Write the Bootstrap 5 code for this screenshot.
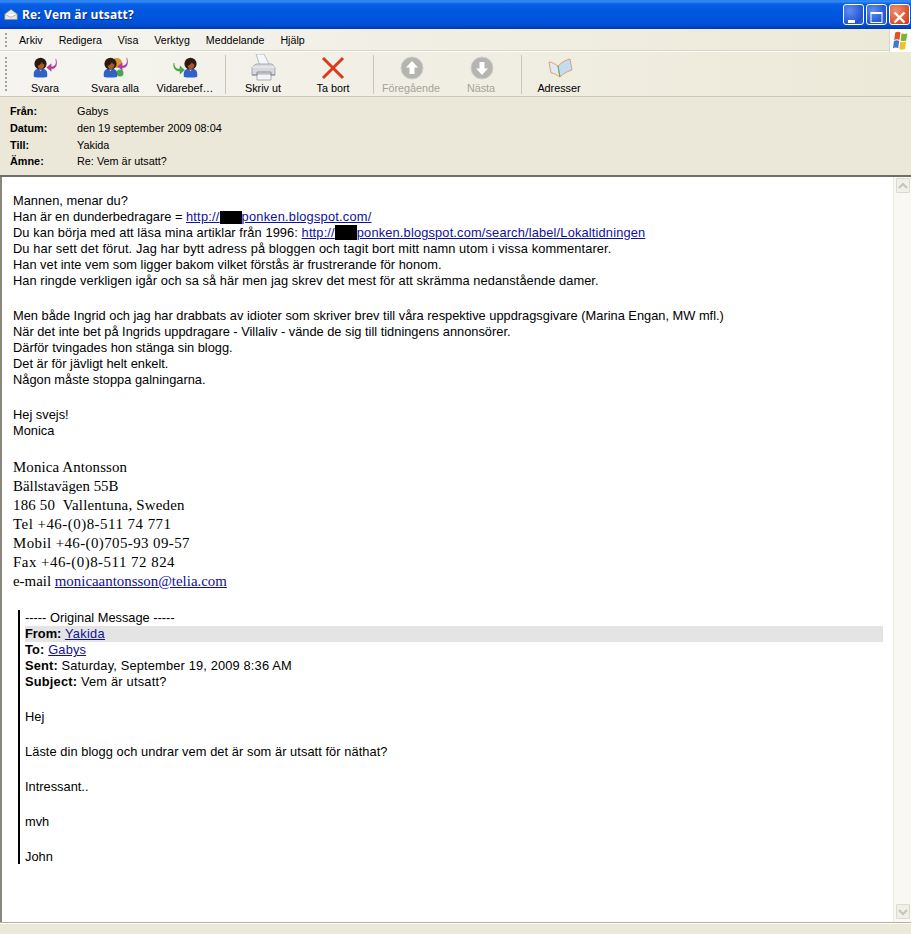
<!DOCTYPE html>
<html lang="sv">
<head>
<meta charset="utf-8">
<title>Re: Vem är utsatt?</title>
<link href="https://cdn.jsdelivr.net/npm/bootstrap@5.3.0/dist/css/bootstrap.min.css" rel="stylesheet">
<style>
html,body{margin:0;height:934px;overflow:hidden;background:#ece9d8}
.xp-win{width:911px;height:934px;font-family:"Liberation Sans",Arial,sans-serif;color:#000}
.xp-title{height:29px;flex:none;background:linear-gradient(#1f74ec 0,#3a93f7 1px,#0a5fe4 4px,#0058e0 12px,#0050d8 24px,#0044c4 27px,#003aa8 29px);color:#fff;padding:0 1px 0 4px}
.xp-title-text{font:bold 12px/28px "Open Sans","Liberation Sans",sans-serif;margin-left:4px;padding-top:1px;text-shadow:1px 1px 0 #0a2a80;letter-spacing:.12px}
.xp-wbtn{width:21px;height:21px;border:1px solid #fff;border-radius:3px;margin-left:2px;background:radial-gradient(circle at 30% 30%,#5f8ff0,#2454d4 70%,#3364e0);display:block}
.xp-wbtn.xp-close{background:radial-gradient(circle at 30% 30%,#ef9070,#d8502a 70%,#c23a18)}
.xp-bar{background:linear-gradient(90deg,#f5f4ef,#ece9d8)}
.xp-menu{height:23px;flex:none;padding-left:19px;font:10.65px/22px "Liberation Sans",sans-serif;gap:16px;border-bottom:1px solid #fff;box-shadow:inset 0 -1px 0 #d8d5c4}
.xp-flag{width:22px;height:23px;background:#fff;border-left:1px solid #d8d5c4;margin-left:auto;overflow:hidden}
.xp-grip{width:2px;background-image:linear-gradient(#a8a596 50%,transparent 50%);background-size:2px 4px;margin:0;flex:none}
.xp-menu .xp-grip{position:absolute;left:5px;top:33px;height:15px}
.xp-tools{height:45px;flex:none;padding-left:10px;border-bottom:1px solid #c9c6b6;position:relative}
.xp-tools .xp-grip{position:absolute;left:5px;top:5px;height:35px}
.xp-tool{width:70px;font-size:10.8px;line-height:13px;text-align:center;white-space:nowrap}
.xp-tool svg{display:block;height:28px;width:30px;margin:2px auto 0}
.xp-off{color:#a5a397}
.xp-sep{width:1px;background:#c9c6b6;margin:3px 2px 2px 5px;flex:none}
.xp-head{height:80px;flex:none;background:#ebe8d9;padding:6px 0 0 10px;font-size:10.85px;line-height:16.8px;border-bottom:2px solid #716f64}
.xp-head dt{width:67px;font-weight:700;margin:0;flex:none}
.xp-head dd{margin:0}
.xp-head dl{margin:0}
.xp-main{height:745px;flex:none;background:#fff;border-left:2px solid #8a887c}
.xp-body{width:891px;padding:16px 0 0 11px;font-size:12.83px;line-height:16px;flex:none;white-space:nowrap}
.xp-body a{color:#10109a;text-decoration:underline}
.xp-gap{height:19px}
.xp-redact{display:inline-block;background:#000;width:22px;height:13px;vertical-align:-3px}
.xp-redact.xp-tall{height:15px;vertical-align:-3px;margin-top:-2px}
.xp-sig{font-family:"Liberation Serif","Times New Roman",serif;font-size:14.9px;line-height:19px;margin-top:19px}
.xp-quote{border-left:2px solid #000;margin:19px 0 0 5px;padding:0 0 0 5px;width:865px;height:254px}
.xp-from{background:#e4e4e4}
.xp-t06{letter-spacing:.06px}
.xp-t08{letter-spacing:.08px}
.xp-t10{letter-spacing:.105px}
.xp-t13{letter-spacing:.13px}
.xp-t16{letter-spacing:.16px}
.xp-t20{letter-spacing:.2px}
.xp-t22{letter-spacing:.22px}
.xp-t30{letter-spacing:.3px}
.xp-t42{letter-spacing:.42px}
.xp-t50{letter-spacing:.5px}
.xp-scroll{width:18px;background:#f9f8f3;border-left:1px solid #eeede5;padding:1px 1px 3px 2px}
.xp-arrow{width:14px;height:15px;background:#f1f0e8;border:1px solid #dcdbd0;border-radius:1px}
.xp-foot{flex:1 1 auto;background:#ece9d8;border-top:1px solid #b5b2a5;box-shadow:inset 0 1px 0 #fff}
</style>
</head>
<body>
<svg width="0" height="0" class="position-absolute">
<defs>
<symbol id="xp-person" viewBox="0 0 16 22">
<path d="M1 21c-1-6 1-9 7-9s8 3 7 9c-4 1-10 1-14 0z" fill="#2f62c8"/>
<path d="M6 12l2 3 2-3z" fill="#dfe8f8"/>
<circle cx="8" cy="7" r="6.500" fill="#2b1a12"/>
<path d="M5 9c.5 2.500 1.600 3.800 3.400 3.800S11.800 11 12.400 8c-1.300-.4-2.300-1.300-3-2.600C8.600 7.200 7 8.600 5 9z" fill="#a8582a"/>
</symbol>
<symbol id="xp-back" viewBox="0 0 14 17">
<path d="M11.500 1c1.500 6-.5 10-5.500 9.500V7L.5 11.500 6 16v-3c6 .5 8-5 5.500-12z" fill="#b53aa8" stroke="#8c2a88" stroke-width=".4"/>
</symbol>
</defs>
</svg>
<div class="xp-win d-flex flex-column">
  <div class="xp-title d-flex align-items-center">
    <svg width="14" height="13" viewBox="0 0 18 15"><path d="M1 7l8-6 8 6v7H1z" fill="#e8e8e0" stroke="#8a8a80" stroke-width=".7"/><path d="M1 7l8 4 8-4" fill="#fff" stroke="#8a8a80" stroke-width=".7"/></svg>
    <span class="xp-title-text">Re: Vem är utsatt?</span>
    <span class="ms-auto d-flex">
      <span class="xp-wbtn"><svg width="19" height="19" viewBox="0 0 19 19"><rect x="4" y="12" width="7" height="3" fill="#fff"/></svg></span>
      <span class="xp-wbtn"><svg width="19" height="19" viewBox="0 0 19 19"><rect x="4" y="4.500" width="11" height="10" fill="none" stroke="#fff" stroke-width="1"/><rect x="4" y="4" width="11" height="2" fill="#fff"/></svg></span>
      <span class="xp-wbtn xp-close"><svg width="19" height="19" viewBox="0 0 19 19"><path d="M4.500 4.500l10 10M14.500 4.500l-10 10" stroke="#fff" stroke-width="2.400"/></svg></span>
    </span>
  </div>
  <div class="xp-menu xp-bar d-flex">
    <span class="xp-grip"></span>
    <span>Arkiv</span><span>Redigera</span><span>Visa</span><span>Verktyg</span><span>Meddelande</span><span>Hjälp</span>
    <span class="xp-flag d-flex align-items-center">
      <svg width="24" height="22" viewBox="0 0 20 20" class="flex-none"><path d="M5 2c2-1 3.500-1 5 0l-1 7c-1.500-1-3-1-5 0z" fill="#e2502a"/><path d="M11 2.500c2 1 3.500 1 5.500 0l-1 7c-2 1-3.500 1-5.500 0z" fill="#7cb82f"/><path d="M3.800 10c2-1 3.500-1 5 0l-1 7c-1.500-1-3-1-5 0z" fill="#3a7ad8"/><path d="M9.800 10.500c2 1 3.500 1 5.500 0l-1 7c-2 1-3.500 1-5.500 0z" fill="#f4c02a"/></svg>
    </span>
  </div>
  <div class="xp-tools xp-bar d-flex">
    <span class="xp-grip"></span>
    <div class="xp-tool"><svg viewBox="0 0 30 28"><use href="#xp-person" x="3" y="3" width="15" height="21"/><use href="#xp-back" x="16" y="4" width="12" height="14"/></svg>Svara</div>
    <div class="xp-tool"><svg viewBox="0 0 30 28"><circle cx="17" cy="9" r="5" fill="#d89a30"/><circle cx="20" cy="19" r="3.500" fill="#4aa848"/><use href="#xp-person" x="3" y="3" width="15" height="21"/><use href="#xp-back" x="17" y="3" width="12" height="14"/></svg>Svara alla</div>
    <div class="xp-tool"><svg viewBox="0 0 30 28"><path d="M4 9c0 4 2.500 6.500 6 6v-3l4.500 4-4.500 4v-3c-4 .5-7.500-3-6-8z" fill="#4aa848" stroke="#2f8a30" stroke-width=".4"/><use href="#xp-person" x="13" y="3" width="15" height="21"/></svg>Vidarebef…</div>
    <span class="xp-sep"></span>
    <div class="xp-tool"><svg viewBox="0 0 30 28"><path d="M8 0h8l6 12H12z" fill="#f4f6fa" stroke="#a8b0bc" stroke-width=".8"/><path d="M4 13l4-3h16l3 3v8H4z" fill="#d6d8dc" stroke="#989ca4" stroke-width=".8"/><path d="M4 13h23" stroke="#f2f2f4"/><path d="M9 20h14v6H9z" fill="#f4f4f8" stroke="#989ca4" stroke-width=".8"/><path d="M4 21h5v-3h14v3h4" fill="none" stroke="#7a7e86" stroke-width=".8"/></svg>Skriv ut</div>
    <div class="xp-tool"><svg viewBox="0 0 30 28"><path d="M5 4l20 20M25 4L5 24" stroke="#dc3a1a" stroke-width="3"/></svg>Ta bort</div>
    <span class="xp-sep"></span>
    <div class="xp-tool xp-off"><svg viewBox="0 0 30 28"><circle cx="16" cy="14" r="11" fill="#b4b4b0" stroke="#d0d0cc"/><path d="M16 7l6 6.500h-3.500V20h-5v-6.500H10z" fill="#fff"/></svg>Föregående</div>
    <div class="xp-tool xp-off"><svg viewBox="0 0 30 28"><circle cx="16" cy="14" r="11" fill="#b4b4b0" stroke="#d0d0cc"/><path d="M16 21l6-6.500h-3.500V8h-5v6.500H10z" fill="#fff"/></svg>Nästa</div>
    <span class="xp-sep"></span>
    <div class="xp-tool"><svg viewBox="0 0 30 28"><path d="M5 8c3 0 6 2 9 4l2 11c-3-2-6-4-9-4z" fill="#dfeaf6" stroke="#e0a070" stroke-width="1"/><path d="M26 5c-4 1-8 3-12 7l2 11c3-3 6-5 12-7z" fill="#c4dcf2" stroke="#e0a070" stroke-width="1"/><path d="M14 12l2 11" stroke="#6fa860"/></svg>Adresser</div>
  </div>
  <div class="xp-head">
    <dl>
      <div class="d-flex"><dt>Från:</dt><dd>Gabys</dd></div>
      <div class="d-flex"><dt>Datum:</dt><dd>den 19 september 2009 08:04</dd></div>
      <div class="d-flex"><dt>Till:</dt><dd>Yakida</dd></div>
      <div class="d-flex"><dt>Ämne:</dt><dd>Re: Vem är utsatt?</dd></div>
    </dl>
  </div>
  <div class="xp-main d-flex">
    <div class="xp-body">
      <div>Mannen, menar du?</div>
      <div>Han är en dunderbedragare = <a href="#" class="xp-t22">http://<span class="xp-redact"></span>ponken.blogspot.com/</a></div>
      <div class="xp-t08">Du kan börja med att läsa mina artiklar från 1996: <a href="#" class="xp-t16">http://<span class="xp-redact xp-tall"></span>ponken.blogspot.com/search/label/Lokaltidningen</a></div>
      <div class="xp-t10">Du har sett det förut. Jag har bytt adress på bloggen och tagit bort mitt namn utom i vissa kommentarer.</div>
      <div>Han vet inte vem som ligger bakom vilket förstås är frustrerande för honom.</div>
      <div class="xp-t06">Han ringde verkligen igår och sa så här men jag skrev det mest för att skrämma nedanstående damer.</div>
      <div class="xp-gap"></div>
      <div>Men både Ingrid och jag har drabbats av idioter som skriver brev till våra respektive uppdragsgivare (Marina Engan, MW mfl.)</div>
      <div>När det inte bet på Ingrids uppdragare - Villaliv - vände de sig till tidningens annonsörer.</div>
      <div>Därför tvingades hon stänga sin blogg.</div>
      <div>Det är för jävligt helt enkelt.</div>
      <div>Någon måste stoppa galningarna.</div>
      <div class="xp-gap"></div>
      <div>Hej svejs!</div>
      <div>Monica</div>
      <div class="xp-sig">
        <div class="xp-t13">Monica Antonsson</div>
        <div>Bällstavägen 55B</div>
        <div class="xp-t20">186 50&nbsp; Vallentuna, Sweden</div>
        <div class="xp-t50">Tel +46-(0)8-511 74 771</div>
        <div class="xp-t42">Mobil +46-(0)705-93 09-57</div>
        <div class="xp-t50">Fax +46-(0)8-511 72 824</div>
        <div>e-mail <a href="#">monicaantonsson@telia.com</a></div>
      </div>
      <div class="xp-quote">
        <div>----- Original Message -----</div>
        <div class="xp-from"><b>From:</b> <a href="#" class="xp-t30">Yakida</a></div>
        <div class="xp-t16"><b>To:</b> <a href="#">Gabys</a></div>
        <div class="xp-t16"><b>Sent:</b> Saturday, September 19, 2009 8:36 AM</div>
        <div class="xp-t20"><b>Subject:</b> Vem är utsatt?</div>
        <div class="xp-gap"></div>
        <div>Hej</div>
        <div class="xp-gap"></div>
        <div class="xp-t06">Läste din blogg och undrar vem det är som är utsatt för näthat?</div>
        <div class="xp-gap"></div>
        <div>Intressant..</div>
        <div class="xp-gap"></div>
        <div>mvh</div>
        <div class="xp-gap"></div>
        <div>John</div>
      </div>
    </div>
    <div class="xp-scroll d-flex flex-column justify-content-between">
      <span class="xp-arrow d-flex align-items-center justify-content-center"><svg width="12" height="12" viewBox="0 0 12 12"><path d="M2 8l4-4 4 4" fill="none" stroke="#c4c4b8" stroke-width="2"/></svg></span>
      <span class="xp-arrow d-flex align-items-center justify-content-center"><svg width="12" height="12" viewBox="0 0 12 12"><path d="M2 4l4 4 4-4" fill="none" stroke="#c4c4b8" stroke-width="2"/></svg></span>
    </div>
  </div>
  <div class="xp-foot"></div>
</div>
</body>
</html>
